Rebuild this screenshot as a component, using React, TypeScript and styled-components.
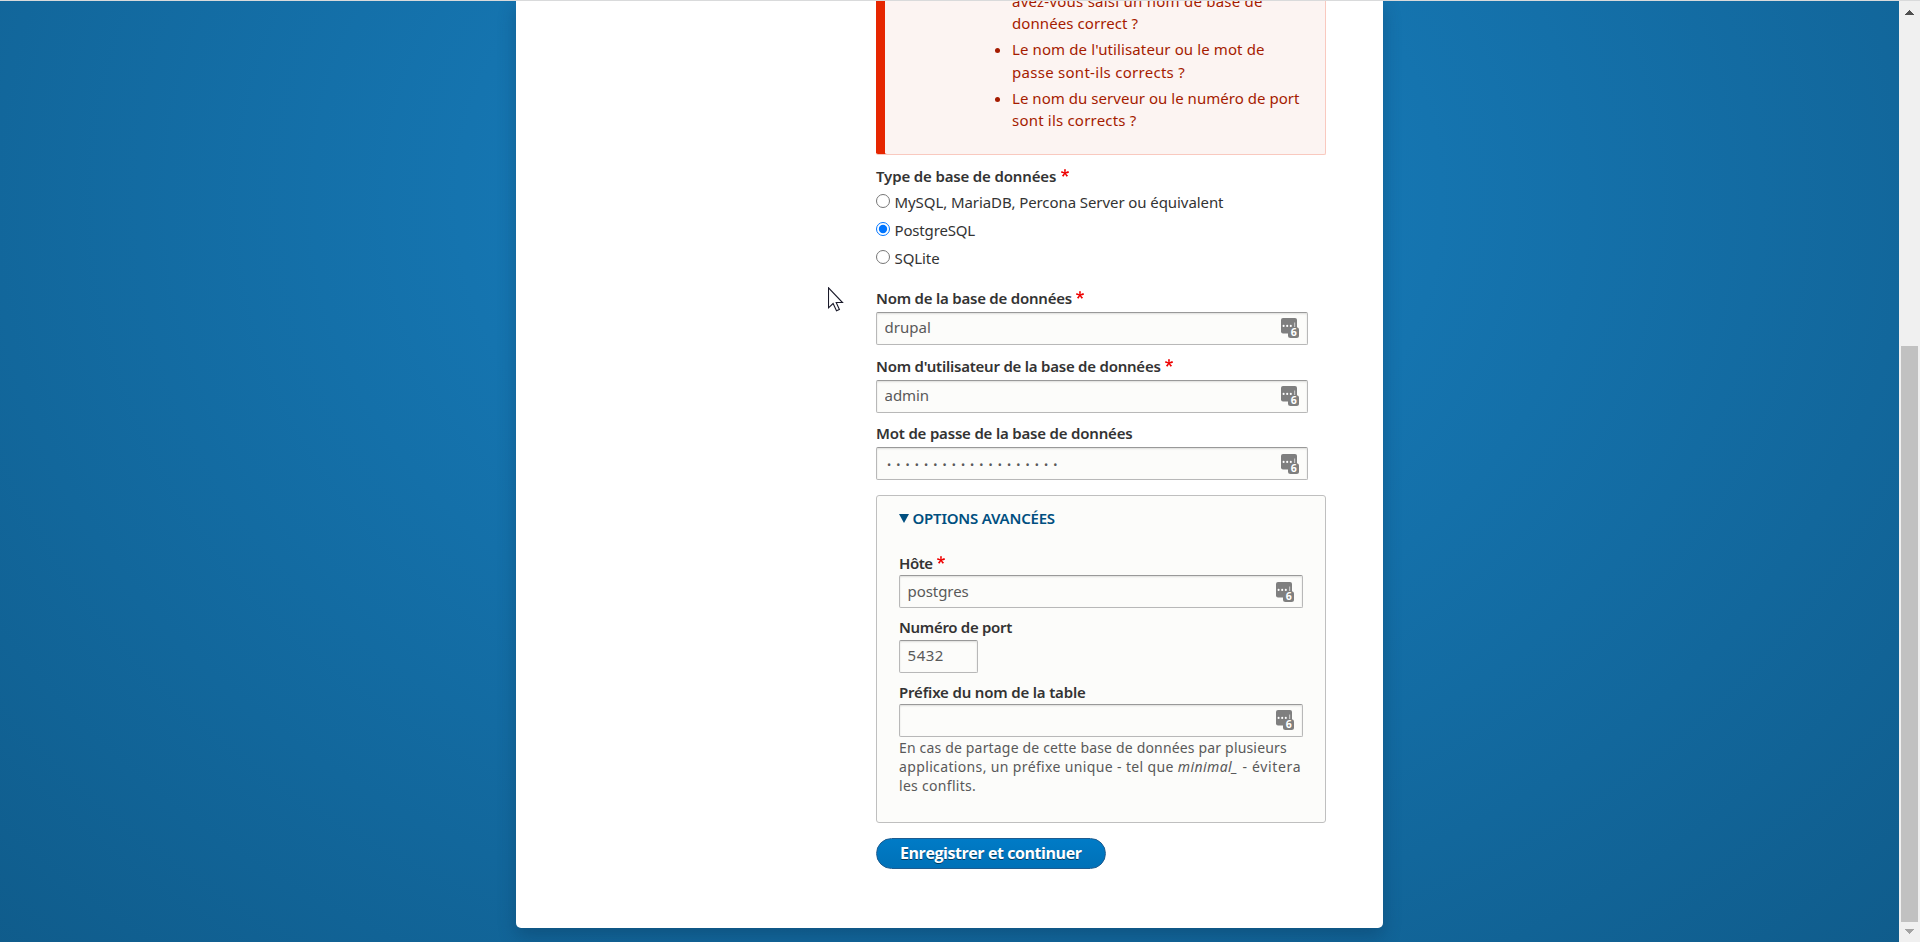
import React from "react";
import styled, { createGlobalStyle } from "styled-components";

const GlobalStyle = createGlobalStyle`
  *, *::before, *::after { box-sizing: border-box; }
  body { margin: 0; overflow: hidden; }
  input, button { font: inherit; margin: 0; }
`;

const Viewport = styled.div`
  position: relative;
  display: flex;
  height: 942px;
  overflow: hidden;
  font-family: "Noto Sans", "Open Sans", sans-serif;
  font-size: 15px;
  color: #333;
`;

const TopEdge = styled.div`
  position: absolute;
  inset: 0 0 auto 0;
  height: 1px;
  background: #d9dadb;
`;

const Page = styled.div`
  flex: 1;
  display: flex;
  align-items: flex-start;
  background: #1275b2
    radial-gradient(1343px 1046px at 950px 202px, hsl(203, 78%, 43%), hsl(203, 80%, 30.5%));
`;

const Card = styled.div`
  display: grid;
  grid-template-columns: 360px 450px;
  width: 867px;
  height: 928px;
  margin-left: 516px;
  background: #fff;
  border-radius: 0 0 5px 5px;
  box-shadow: 0 8px 18px rgba(8, 45, 75, 0.32);
`;

const Main = styled.main`
  grid-column: 2;
  display: flex;
  flex-direction: column;
`;

const Alert = styled.div`
  display: flex;
  flex-direction: column;
  justify-content: flex-end;
  height: 155px;
  overflow: hidden;
  padding: 0 0 22.3px 103px;
  background: #fcf4f2;
  border: 1px solid #f9c9bf;
  border-top: 0;
  border-left: 0;
  border-radius: 0 0 2px 2px;
  box-shadow: inset 9px 0 0 #e62600;
  color: #a51b00;
`;

const AlertList = styled.ul`
  display: flex;
  flex-direction: column;
  gap: 3.6px;
  margin: 0;
  padding: 0;
  list-style: none;
`;

const AlertItem = styled.li<{ $continued?: boolean }>`
  display: grid;
  grid-template-columns: 33px 1fr;
  line-height: 22.5px;
  flex: none;

  &::before {
    content: "";
    width: 5px;
    height: 5px;
    margin: 10px 0 0 16px;
    border-radius: 50%;
    background: ${(p) => (p.$continued ? "transparent" : "#a51b00")};
  }
`;

const Line = styled.span<{ $spacing?: number }>`
  display: block;
  white-space: pre;
  letter-spacing: ${(p) => p.$spacing ?? 0}px;
`;

const Run = styled.span<{ $spacing: number }>`
  letter-spacing: ${(p) => p.$spacing}px;
`;

const Label = styled.label<{ $spacing?: number }>`
  display: flex;
  gap: 4.5px;
  height: 21px;
  line-height: 21px;
  font-weight: 600;
  white-space: pre;
  letter-spacing: ${(p) => p.$spacing ?? 0}px;
`;

const Star = styled.svg`
  width: 8px;
  height: 8px;
  margin-top: 2.5px;
  fill: #ee0000;
`;

const RadioGroup = styled.div`
  display: flex;
  flex-direction: column;
  margin-top: 11px;
`;

const RadioRows = styled.div`
  margin-top: 1px;
`;

const RadioRow = styled.label<{ $spacing?: number }>`
  display: flex;
  align-items: center;
  gap: 4.5px;
  height: 28px;
  line-height: 28px;
  letter-spacing: ${(p) => p.$spacing ?? 0}px;

  input {
    width: 14px;
    height: 14px;
    margin: 0 0 2px;
  }
`;

const Field = styled.div<{ $top: number; $gap?: number }>`
  display: flex;
  flex-direction: column;
  gap: ${(p) => p.$gap ?? 1}px;
  margin-top: ${(p) => p.$top}px;
`;

const InputBox = styled.div<{ $width: number }>`
  display: flex;
  align-items: flex-start;
  width: ${(p) => p.$width}px;
  height: 33px;
  border: 1px solid #b8b8b8;
  border-top-color: #999;
  border-radius: 2px;
  background: #fcfcfa;
  box-shadow: inset 0 1px 2px rgba(0, 0, 0, 0.125);
`;

const Input = styled.input<{ $spacing?: number; $lift?: number }>`
  flex: 1;
  min-width: 0;
  height: 31px;
  padding: 0 0 ${(p) => p.$lift ?? 4}px 7.6px;
  border: 0;
  outline: 0;
  background: transparent;
  color: #595959;
  letter-spacing: ${(p) => p.$spacing ?? 0}px;
`;

const PasswordInput = styled(Input)`
  padding: 1px 0 0 10px;
  font-size: 11px;
  letter-spacing: 5.1px;
`;

const IconSlot = styled.span<{ $top: number }>`
  display: flex;
  margin: ${(p) => p.$top}px 8px 0 0;
`;

const Details = styled.section`
  display: flex;
  flex-direction: column;
  height: 328px;
  margin-top: 15px;
  padding: 12px 22px 0;
  border: 1px solid #bfbfbf;
  border-radius: 3px;
  background: #fcfcfa;
`;

const Summary = styled.div`
  display: flex;
  align-items: center;
  gap: 4px;
  height: 21px;
  margin-left: -0.5px;
  line-height: 21px;
  font-weight: 600;
  color: #004f80;
  letter-spacing: -0.22px;

  &::before {
    content: "";
    border: solid transparent;
    border-width: 9px 5px 0;
    border-top-color: #004f80;
  }
`;

const Help = styled.div`
  font-size: 14px;
  line-height: 19px;
  color: #595959;
`;

const Submit = styled.button`
  align-self: flex-start;
  width: 229.5px;
  height: 31px;
  margin-top: 15px;
  padding: 0 0 2px;
  border: 1px solid #1e5c90;
  border-radius: 16px;
  background: linear-gradient(#007bc6, #0071b8);
  color: #fff;
  font-family: "Open Sans", "Noto Sans", sans-serif;
  font-size: 16px;
  font-weight: 700;
  line-height: 28px;
  letter-spacing: -0.43px;
  text-shadow: 0 1px rgba(0, 0, 0, 0.5);
`;

const Scrollbar = styled.div`
  display: flex;
  flex-direction: column;
  align-items: center;
  width: 21px;
  background: #f0f0f0;
`;

const Arrow = styled.svg<{ $top: number }>`
  width: 9px;
  height: 5px;
  margin-top: ${(p) => p.$top}px;
  shape-rendering: crispEdges;
`;

const Thumb = styled.div`
  width: 17px;
  height: 576px;
  margin-top: 331px;
  background: #c1c1c1;
`;

const Pointer = styled.svg`
  position: absolute;
  left: 828px;
  top: 287px;
  width: 16px;
  height: 25px;
`;

const Required = () => (
  <Star viewBox="0 0 16 16" aria-label="obligatoire">
    <path d="M0,7.562l1.114-3.438c2.565,0.906,4.43,1.688,5.59,2.35C6.398,3.553,6.237,1.544,6.22,0.447h3.511c-0.05,1.597-0.234,3.6-0.558,6.003c1.664-0.838,3.566-1.613,5.714-2.325L16,7.562c-2.05,0.678-4.06,1.131-6.028,1.356c0.984,0.856,2.372,2.381,4.166,4.575l-2.906,2.059c-0.935-1.274-2.041-3.009-3.316-5.206c-1.194,2.275-2.244,4.013-3.147,5.206l-2.856-2.059c1.872-2.307,3.211-3.832,4.017-4.575C3.849,8.516,1.872,8.062,0,7.562" />
  </Star>
);

const VaultIcon = ({ top }: { top: number }) => (
  <IconSlot $top={top}>
    <svg width="18" height="20" viewBox="0 0 18 20">
      <rect width="16" height="15.5" rx="2" fill="#7f7f7f" />
      <circle cx="2.6" cy="7.9" r="1.05" fill="#fff" />
      <circle cx="6.2" cy="7.9" r="1.05" fill="#fff" />
      <circle cx="9.8" cy="7.9" r="1.05" fill="#fff" />
      <rect x="13" y="4.5" width="1.2" height="4.5" fill="#c4c4c4" />
      <rect x="7" y="9.3" width="11" height="10.7" rx="2.5" fill="#7f7f7f" />
      <text x="12.8" y="18.4" fontSize="10.5" fontWeight="700" textAnchor="middle" fill="#fff">
        6
      </text>
    </svg>
  </IconSlot>
);

export default function App() {
  return (
    <>
      <GlobalStyle />
      <Viewport>
        <Page>
          <Card>
            <Main>
              <Alert>
                <AlertList>
                  <AlertItem $continued>
                    <div>
                      <Line $spacing={0.24}>avez-vous saisi un nom de base de</Line>
                      <Line $spacing={0.08}>données correct ?</Line>
                    </div>
                  </AlertItem>
                  <AlertItem>
                    <div>
                      <Line $spacing={0.11}>Le nom de l'utilisateur ou le mot de</Line>
                      <Line $spacing={0.28}>passe sont-ils corrects ?</Line>
                    </div>
                  </AlertItem>
                  <AlertItem>
                    <div>
                      <Line $spacing={0.04}>Le nom du serveur ou le numéro de port</Line>
                      <Line $spacing={0.2}>sont ils corrects ?</Line>
                    </div>
                  </AlertItem>
                </AlertList>
              </Alert>

              <RadioGroup>
                <Label as="div" $spacing={-0.15}>
                  Type de base de données
                  <Required />
                </Label>
                <RadioRows>
                  <RadioRow $spacing={-0.08}>
                    <input type="radio" name="driver" />
                    MySQL, MariaDB, Percona Server ou équivalent
                  </RadioRow>
                  <RadioRow $spacing={-0.16}>
                    <input type="radio" name="driver" defaultChecked />
                    PostgreSQL
                  </RadioRow>
                  <RadioRow $spacing={-0.08}>
                    <input type="radio" name="driver" />
                    SQLite
                  </RadioRow>
                </RadioRows>
              </RadioGroup>

              <Field $top={16} $gap={3}>
                <Label $spacing={-0.22}>
                  Nom de la base de données
                  <Required />
                </Label>
                <InputBox $width={432}>
                  <Input defaultValue="drupal" />
                  <VaultIcon top={5} />
                </InputBox>
              </Field>
              <Field $top={11} $gap={3}>
                <Label $spacing={-0.23}>
                  Nom d'utilisateur de la base de données
                  <Required />
                </Label>
                <InputBox $width={432}>
                  <Input defaultValue="admin" $spacing={-0.1} />
                  <VaultIcon top={5} />
                </InputBox>
              </Field>
              <Field $top={10} $gap={3}>
                <Label $spacing={-0.19}>Mot de passe de la base de données</Label>
                <InputBox $width={432}>
                  <PasswordInput defaultValue={"•".repeat(19)} />
                  <VaultIcon top={6} />
                </InputBox>
              </Field>

              <Details>
                <Summary>OPTIONS AVANCÉES</Summary>
                <Field $top={24}>
                  <Label $spacing={-0.45}>
                    Hôte
                    <Required />
                  </Label>
                  <InputBox $width={404}>
                    <Input defaultValue="postgres" $lift={2} $spacing={-0.08} />
                    <VaultIcon top={6} />
                  </InputBox>
                </Field>
                <Field $top={9} $gap={2}>
                  <Label $spacing={-0.31}>Numéro de port</Label>
                  <InputBox $width={79}>
                    <Input defaultValue="5432" $spacing={0.5} />
                  </InputBox>
                </Field>
                <Field $top={9}>
                  <Label $spacing={-0.17}>Préfixe du nom de la table</Label>
                  <InputBox $width={404}>
                    <Input />
                    <VaultIcon top={5} />
                  </InputBox>
                  <Help>
                    <Line $spacing={0.17}>En cas de partage de cette base de données par plusieurs</Line>
                    <Line>
                      <Run $spacing={0.36}>applications, un préfixe unique - tel que </Run>
                      <Run as="em" $spacing={0.42}>minimal_</Run>
                      <Run $spacing={0.68}> - évitera</Run>
                    </Line>
                    <Line $spacing={0.3}>les conflits.</Line>
                  </Help>
                </Field>
              </Details>

              <Submit>Enregistrer et continuer</Submit>
            </Main>
          </Card>
        </Page>
        <Scrollbar>
          <Arrow $top={10} viewBox="0 0 9 5">
            <path d="M0 5 4.5 0 9 5z" fill="#505050" />
          </Arrow>
          <Thumb />
          <Arrow $top={7} viewBox="0 0 9 5">
            <path d="M0 0 4.5 5 9 0z" fill="#a3a3a3" />
          </Arrow>
        </Scrollbar>
        <TopEdge />
        <Pointer viewBox="0 0 16 25">
          <path
            d="M.5.8v20l4.6-4.3 3.4 7.2 2.9-1.3-3.2-6.9h6.3z"
            fill="#fff"
            stroke="#1a1a2a"
            strokeWidth="1.1"
          />
        </Pointer>
      </Viewport>
    </>
  );
}
